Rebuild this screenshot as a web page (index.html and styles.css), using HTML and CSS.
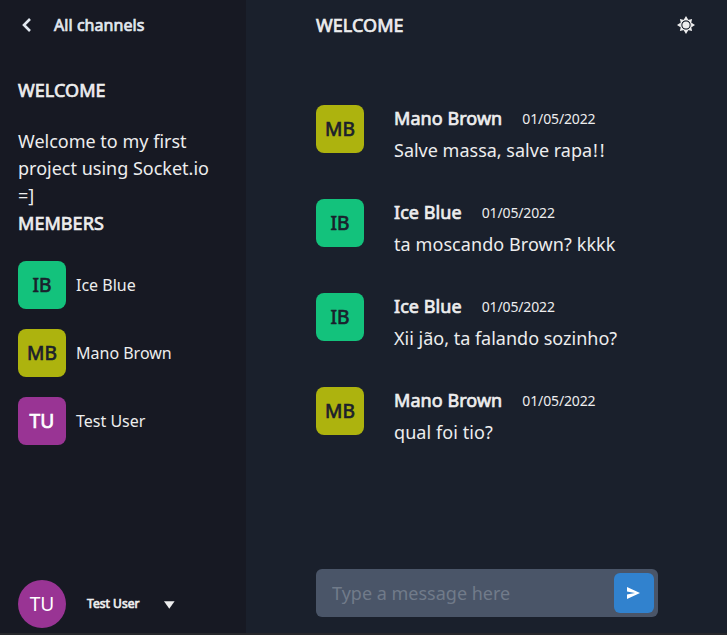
FILE: index.html
```html
<!DOCTYPE html>
<html lang="en">
<head>
<meta charset="utf-8">
<title>Welcome</title>
<link rel="stylesheet" href="styles.css">
</head>
<body>
<div class="app">
  <aside class="sidebar">
    <header class="back">
      <svg class="back-icon" viewBox="0 0 24 24"><path d="M12 6 6 12l6 6"/></svg>
      <span class="strong">All channels</span>
    </header>
    <section class="info">
      <h2 class="strong title">WELCOME</h2>
      <p class="description">Welcome to my first project using Socket.io =]</p>
      <h2 class="strong title">MEMBERS</h2>
      <ul class="members">
        <li><span class="avatar green strong">IB</span>Ice Blue</li>
        <li><span class="avatar olive strong">MB</span>Mano Brown</li>
        <li><span class="avatar purple strong">TU</span>Test User</li>
      </ul>
    </section>
    <footer class="user">
      <span class="avatar round purple">TU</span>
      <span class="strong user-name">Test User</span>
      <svg class="caret" viewBox="0 0 11 8"><path d="M0 .3h10.6L5.3 7.8z"/></svg>
    </footer>
  </aside>
  <main class="chat">
    <header class="chat-header">
      <h1 class="strong title">WELCOME</h1>
      <svg class="sun" viewBox="-9 -9 18 18">
        <circle r="3.6"/>
        <circle class="ring" r="5.2"/>
        <g id="rays"><path d="M-2.4-5.1 0-9l2.4 3.9zM-2.4 5.1 0 9l2.4-3.9zM-5.1-2.4-9 0l3.9 2.4zM5.1-2.4 9 0 5.1 2.4z"/></g>
        <use href="#rays" transform="rotate(45)scale(.96)"/>
      </svg>
    </header>
    <div class="messages">
      <article class="message">
        <span class="avatar olive strong">MB</span>
        <div><div class="meta"><b class="strong">Mano Brown</b><time>01/05/2022</time></div><p>Salve massa, salve rapa<span class="marks">!!</span></p></div>
      </article>
      <article class="message">
        <span class="avatar green strong">IB</span>
        <div><div class="meta"><b class="strong">Ice Blue</b><time>01/05/2022</time></div><p class="loose">ta moscando Brown? kkkk</p></div>
      </article>
      <article class="message">
        <span class="avatar green strong">IB</span>
        <div><div class="meta"><b class="strong">Ice Blue</b><time>01/05/2022</time></div><p>Xii jão, ta falando sozinho?</p></div>
      </article>
      <article class="message">
        <span class="avatar olive strong">MB</span>
        <div><div class="meta"><b class="strong">Mano Brown</b><time>01/05/2022</time></div><p class="loose">qual foi tio?</p></div>
      </article>
    </div>
    <form class="composer">
      <input type="text" placeholder="Type a message here">
      <button type="button" aria-label="Send"><svg viewBox="0 0 13 12"><path d="M0 0 13 6 0 12V7.5L8 6 0 4.5z"/></svg></button>
    </form>
  </main>
</div>
</body>
</html>
```
FILE: styles.css
```css
* { box-sizing: border-box; margin: 0; padding: 0; }
body {
  font: 400 18px/27px "Noto Sans", sans-serif;
  color: #ededee;
  background: #1a202c;
}
svg { fill: currentColor; display: block; }
.app {
  display: flex;
  height: 635px;
  border-bottom: 2px solid #26272b;
}
.strong { font-weight: 400; -webkit-text-stroke: 0.7px currentColor; letter-spacing: 0.06px; }
.title { font-size: 18px; line-height: 27px; }

.sidebar {
  display: flex;
  flex-direction: column;
  width: 246px;
  padding: 0 18px;
  background: #171923;
}
.back {
  display: flex;
  align-items: center;
  height: 50px;
  font-size: 16px;
  color: #e2e8f0;
}
.back-icon {
  width: 24px;
  height: 24px;
  margin-right: 12px;
  fill: none;
  stroke: currentColor;
  stroke-width: 2.6;
}
.info { padding-top: 27px; }
.description { width: 202px; margin-top: 24px; margin-bottom: 1px; }
.members { list-style: none; margin-top: 24px; }
.members li {
  display: flex;
  align-items: center;
  gap: 10px;
  margin-bottom: 20px;
  font-size: 16px;
}
.avatar {
  display: flex;
  flex: none;
  align-items: center;
  justify-content: center;
  width: 48px;
  height: 48px;
  padding-bottom: 2px;
  border-radius: 8px;
  font-size: 19.2px;
  color: #1a202c;
}
.green { background: #13c27c; }
.olive { background: #adb30e; }
.purple { background: #993494; color: #fff; }
.round { border-radius: 50%; }
.user {
  display: flex;
  align-items: center;
  margin-top: auto;
  padding-bottom: 5px;
}
.user-name { margin-left: 21px; padding-bottom: 2px; font-size: 12px; }
.caret { width: 11px; height: 8px; margin: 1px 0 0 24px; }

.chat { display: flex; flex: 1; flex-direction: column; }
.chat-header {
  display: flex;
  align-items: center;
  justify-content: space-between;
  height: 50px;
  padding: 0 32px 0 70px;
}
.sun { width: 18px; height: 18px; }
.ring { fill: none; stroke: currentColor; stroke-width: 1; }
.messages {
  display: flex;
  flex-direction: column;
  gap: 36px;
  padding: 55px 69px 0 70px;
}
.message { display: flex; gap: 30px; height: 58px; }
.meta { display: flex; align-items: center; gap: 20px; height: 27px; margin-bottom: 5px; }
.meta time { padding-bottom: 1px; font-size: 14px; letter-spacing: -0.13px; }
.marks { margin-left: 1px; letter-spacing: 1.8px; }
.loose { letter-spacing: 0.08px; }
.composer {
  display: flex;
  align-items: center;
  height: 48px;
  margin: auto 69px 16px 70px;
  padding: 4px 4px 4px 16px;
  border-radius: 6px;
  background: #4a5568;
}
.composer input {
  flex: 1;
  min-width: 0;
  border: 0;
  outline: 0;
  background: none;
  font: inherit;
  color: inherit;
}
.composer input::placeholder { color: #717b8a; opacity: 1; }
.composer button {
  display: flex;
  align-items: center;
  justify-content: center;
  width: 40px;
  height: 40px;
  padding-right: 1px;
  border: 0;
  border-radius: 6px;
  background: #3182ce;
  color: #fff;
}
.composer button svg { width: 13px; height: 12px; }
```
